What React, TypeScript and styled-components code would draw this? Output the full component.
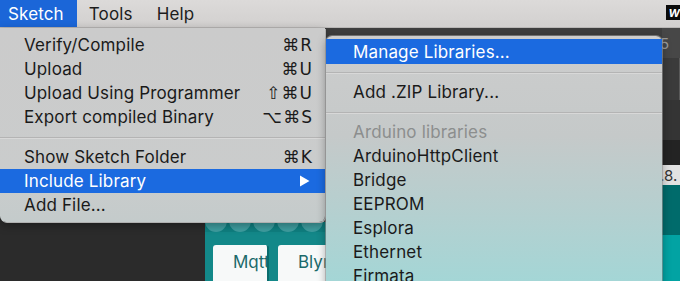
import React from "react";
import styled, { createGlobalStyle } from "styled-components";

const GlobalStyle = createGlobalStyle`
  html, body {
    margin: 0;
    padding: 0;
    width: 680px;
    height: 281px;
    overflow: hidden;
    background: #2a2a2a;
  }
  body {
    font-family: Inter, "Liberation Sans", "DejaVu Sans", sans-serif;
    -webkit-font-smoothing: antialiased;
  }
`;

const FONT = `Inter, "Liberation Sans", "DejaVu Sans", sans-serif`;

const mainItems = [
  { label: "Verify/Compile", key: "⌘R" },
  { label: "Upload", key: "⌘U" },
  { label: "Upload Using Programmer", key: "⇧⌘U" },
  { label: "Export compiled Binary", key: "⌥⌘S" },
  { sep: true },
  { label: "Show Sketch Folder", key: "⌘K" },
  { label: "Include Library", sub: true, active: true },
  { label: "Add File..." },
];

const libraries = [
  "ArduinoHttpClient",
  "Bridge",
  "EEPROM",
  "Esplora",
  "Ethernet",
  "Firmata",
  "GSM",
];

const App = () => {
  return (
    <>
      <GlobalStyle />
      <Screen>
        <MenuBar>
          <BarItem active>Sketch</BarItem>
          <BarItem>Tools</BarItem>
          <BarItem>Help</BarItem>
          <Spacer />
          <Badge>W</Badge>
        </MenuBar>
        <Window>
          <DarkPane />
          <Content>
            <MainCol>
              <Toolbar />
              <CardArea>
                <Bubbles>
                  {Array.from({ length: 5 }).map((_, i) => (
                    <Bubble key={i} />
                  ))}
                </Bubbles>
                <Cards>
                  <Card>Mqtt(</Card>
                  <Card>Blyn</Card>
                </Cards>
              </CardArea>
            </MainCol>
            <SideStrip>
              <Band color="#474747" h={30}>
                <BandText light>5</BandText>
              </Band>
              <Band color="#3b3b3b" h={42} divider />
              <Band color="#343434" h={40} />
              <Band color="#232323" h={25} />
              <Band color="#e2e2e2" h={20}>
                <BandText>.8.</BandText>
              </Band>
              <Band color="#006b6b" h={50} />
              <Band color="#02a3a3" h={46} />
            </SideStrip>
          </Content>
        </Window>

        <MainMenu>
          {mainItems.map((it, i) =>
            it.sep ? (
              <Separator key={i} />
            ) : (
              <Row key={i} active={it.active}>
                <span>{it.label}</span>
                {it.key && <Shortcut>{it.key}</Shortcut>}
                {it.sub && (
                  <svg width="11" height="12" viewBox="0 0 11 12">
                    <path d="M1 0.5 L10.5 6 L1 11.5 Z" fill="#fff" />
                  </svg>
                )}
              </Row>
            )
          )}
        </MainMenu>

        <SubMenu>
          <Row active>Manage Libraries...</Row>
          <Separator />
          <Row>Add .ZIP Library...</Row>
          <Separator />
          <Row disabled>Arduino libraries</Row>
          {libraries.map((l) => (
            <Row key={l}>{l}</Row>
          ))}
        </SubMenu>
      </Screen>
    </>
  );
};

export default App;

const Screen = styled.div`
  position: relative;
  width: 680px;
  height: 281px;
  display: flex;
  flex-direction: column;
  overflow: hidden;
`;

const MenuBar = styled.div`
  height: 28px;
  display: flex;
  align-items: stretch;
  background: linear-gradient(#dcdad9, #d2d0cf);
  border-bottom: 1px solid #b9b7b6;
  box-sizing: border-box;
  font-family: ${FONT};
  font-size: 17px;
  letter-spacing: 0.15px;
`;

const BarItem = styled.div<{ active?: boolean }>`
  display: flex;
  align-items: center;
  padding: 0 13px 0 8px;
  color: ${(p) => (p.active ? "#fff" : "#1c1c1c")};
  background: ${(p) => (p.active ? "#1b66d8" : "transparent")};
  &:nth-child(2) {
    padding-left: 12px;
  }
  &:nth-child(3) {
    padding-left: 11px;
  }
`;

const Spacer = styled.div`
  flex: 1;
`;

const Badge = styled.div`
  align-self: flex-start;
  margin-top: 5px;
  width: 14px;
  height: 15px;
  background: #0a0a0a;
  color: #fff;
  font-size: 11px;
  font-weight: 700;
  font-style: italic;
  display: flex;
  align-items: center;
  justify-content: flex-end;
  overflow: hidden;
`;

const Window = styled.div`
  flex: 1;
  display: flex;
`;

const DarkPane = styled.div`
  width: 205px;
  background: #2b2b2b;
`;

const Content = styled.div`
  flex: 1;
  display: flex;
`;

const MainCol = styled.div`
  flex: 1;
  display: flex;
  flex-direction: column;
`;

const Toolbar = styled.div`
  flex: 1;
  background: #3e3e3e;
`;

const CardArea = styled.div`
  height: 59px;
  background: #138889;
  display: flex;
  flex-direction: column;
  overflow: hidden;
`;

const Bubbles = styled.div`
  height: 10px;
  display: flex;
  gap: 2px;
  background: #0f7f80;
  overflow: hidden;
`;

const Bubble = styled.div`
  flex: 0 0 22px;
  height: 22px;
  margin-top: -12px;
  border-radius: 50%;
  background: #3f9ea0;
`;

const Cards = styled.div`
  flex: 1;
  display: flex;
  gap: 9px;
  padding: 13px 0 0 8px;
`;

const Card = styled.div`
  width: 56px;
  flex-shrink: 0;
  background: #f7f9f9;
  border-radius: 3px 3px 0 0;
  color: #1b6a6b;
  font-family: ${FONT};
  font-size: 17px;
  padding: 7px 0 0 20px;
  box-sizing: border-box;
  overflow: hidden;
  white-space: nowrap;
  border-right: 2px solid #0b6c6d;
`;

const SideStrip = styled.div`
  width: 18px;
  display: flex;
  flex-direction: column;
`;

const Band = styled.div<{ color: string; h: number; divider?: boolean }>`
  height: ${(p) => p.h}px;
  flex-shrink: 0;
  background: ${(p) => p.color};
  display: flex;
  align-items: center;
  overflow: hidden;
  box-shadow: ${(p) => (p.divider ? "inset -8px 0 0 -7px #5a5a5a" : "none")};
`;

const BandText = styled.span<{ light?: boolean }>`
  font-family: ${FONT};
  font-size: 15px;
  color: ${(p) => (p.light ? "#9a9a9a" : "#333")};
  margin-left: -2px;
  white-space: nowrap;
`;

const MenuPanel = styled.div`
  position: absolute;
  display: flex;
  flex-direction: column;
  font-family: ${FONT};
  font-size: 17px;
  letter-spacing: 0.15px;
  box-sizing: border-box;
`;

const MainMenu = styled(MenuPanel)`
  left: 0;
  top: 28px;
  width: 325px;
  height: 194px;
  padding-top: 5px;
  background: linear-gradient(#cbcbcb, #cacccc 150px, #c4cbcb);
  border-radius: 0 0 6px 6px;
  box-shadow: 1px 1px 0 #b0b0b0, 0 3px 10px rgba(0, 0, 0, 0.35);
`;

const SubMenu = styled(MenuPanel)`
  left: 326px;
  top: 36px;
  width: 336px;
  height: 300px;
  padding-top: 3px;
  border-radius: 6px 6px 0 0;
  background: linear-gradient(#cdcdcd 0px, #c5c9c9 100px, #b6cfcf 170px, #a4d6d6 245px);
  box-shadow: 0 0 0 1px rgba(150, 150, 150, 0.6), 0 3px 10px rgba(0, 0, 0, 0.35);
`;

const Row = styled.div<{ active?: boolean; disabled?: boolean }>`
  height: 24px;
  flex-shrink: 0;
  display: flex;
  align-items: center;
  justify-content: space-between;
  padding: 0 12px 0 24px;
  white-space: nowrap;
  color: ${(p) => (p.active ? "#fff" : p.disabled ? "#8c8e8e" : "#1a1a1a")};
  background: ${(p) => (p.active ? "#1b6ae0" : "transparent")};

  ${SubMenu} & {
    padding-left: 27px;
  }
  ${SubMenu} &:first-child {
    height: 25px;
  }
  & > svg {
    margin-right: 3px;
  }
`;

const Shortcut = styled.span`
  font-family: "DejaVu Sans", ${FONT};
  font-size: 17px;
  letter-spacing: 1px;
`;

const Separator = styled.div`
  height: 16px;
  flex-shrink: 0;
  display: flex;
  align-items: center;
  &::after {
    content: "";
    flex: 1;
    height: 1px;
    background: #b4b4b4;
    box-shadow: 0 1px 0 #d8d8d8;
  }
`;
